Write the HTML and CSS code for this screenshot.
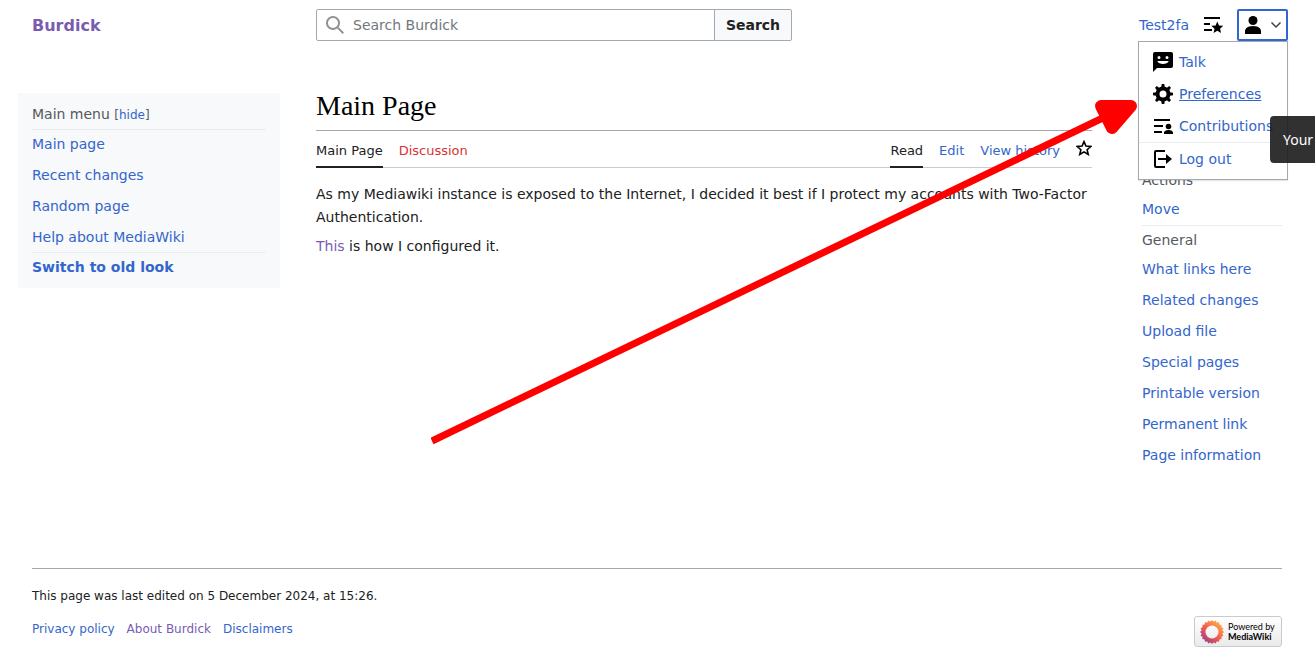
FILE: index.html
```html
<!DOCTYPE html>
<html lang="en">
<head>
    <meta charset="UTF-8">
    <meta name="viewport" content="width=device-width, initial-scale=1.0">
    <title>Main Page - Burdick</title>
    <link rel="stylesheet" href="styles.css">
</head>
<body>
    <header class="header">
        <a class="logo" href="#">Burdick</a>
        <form class="search">
            <label class="search-field">
                <svg class="icon" viewBox="0 0 20 20"><path fill-rule="evenodd" d="M12.2 13.6a7 7 0 1 1 1.4-1.4l5.4 5.4-1.4 1.4zM3 8a5 5 0 1 0 10 0A5 5 0 0 0 3 8z"/></svg>
                <input type="search" placeholder="Search Burdick" aria-label="Search Burdick">
            </label>
            <button class="search-button" type="submit">Search</button>
        </form>
        <div class="user-links">
            <a href="#">Test2fa</a>
            <a class="watchlist" href="#" aria-label="Watchlist">
                <svg class="icon" viewBox="0 0 20 20"><path d="M1 2h16v2H1zm0 6h6v2H1zm0 6h8v2H1z"/><path d="M14.3 6.4l1.7 4 4.3.4-3.2 2.9.9 4.3-3.7-2.3-3.7 2.300.9-4.300-3.200-2.900 4.300-.4z"/></svg>
            </a>
            <div class="user-menu">
                <button class="user-button" type="button" aria-label="Personal tools">
                    <svg class="icon" viewBox="0 0 20 20"><circle cx="10" cy="5.5" r="4.5"/><path d="M10 11c-5.9 0-8 3-8 5v3h16v-3c0-2-2.1-5-8-5z"/></svg>
                    <svg class="chevron" viewBox="0 0 12 12"><path d="M1.5 3.5L6 8l4.5-4.5"/></svg>
                </button>
                <ul class="dropdown">
                    <li><a href="#">
                        <svg class="icon" viewBox="0 0 20 20"><path fill-rule="evenodd" d="M18 0H2a2 2 0 0 0-2 2v18l4-4h14a2 2 0 0 0 2-2V2a2 2 0 0 0-2-2zm-4 4a1.5 1.5 0 1 1-1.5 1.5A1.5 1.5 0 0 1 14 4zM6 4a1.5 1.5 0 1 1-1.5 1.5A1.5 1.5 0 0 1 6 4zm4 8c-2.6 0-4.8-.7-5.7-3h11.4c-.9 2.3-3.1 3-5.7 3z"/></svg>
                        Talk</a></li>
                    <li><a class="active" href="#">
                        <svg class="icon" viewBox="0 0 20 20"><circle class="gear-ring" cx="10" cy="10" r="5.5"/><path id="tooth" d="M8.2 3.5L8.7 0h2.6l.5 3.5zM8.2 16.5l.5 3.5h2.6l.5-3.5z"/><use href="#tooth" transform="rotate(45 10 10)"/><use href="#tooth" transform="rotate(90 10 10)"/><use href="#tooth" transform="rotate(135 10 10)"/></svg>
                        <span>Preferences</span></a></li>
                    <li><a href="#">
                        <svg class="icon" viewBox="0 0 20 20"><path d="M1 3h16v2H1zm0 6h9v2H1zm0 6h8v2H1z"/><circle cx="15.5" cy="10.5" r="2.8"/><path d="M15.5 14c-3.3 0-4.5 1.6-4.5 2.8V18h9v-1.2c0-1.200-1.200-2.800-4.500-2.800z"/></svg>
                        Contributions</a></li>
                    <li class="divided"><a href="#">
                        <svg class="icon" viewBox="0 0 20 20"><path d="M3 3h9V1H3a2 2 0 0 0-2 2v14a2 2 0 0 0 2 2h9v-2H3z"/><path d="M13 5v4H5v2h8v4l6-5z"/></svg>
                        Log out</a></li>
                </ul>
            </div>
        </div>
    </header>

    <div class="page">
        <nav class="main-menu">
            <div class="menu-heading">Main menu <button type="button">[<span>hide</span>]</button></div>
            <ul class="links">
                <li><a href="#">Main page</a></li>
                <li><a href="#">Recent changes</a></li>
                <li><a href="#">Random page</a></li>
                <li><a href="#">Help about MediaWiki</a></li>
            </ul>
            <a class="switch-look" href="#">Switch to old look</a>
        </nav>

        <main class="content">
            <h1>Main Page</h1>
            <div class="tabs">
                <a class="selected" href="#">Main Page</a>
                <a class="missing" href="#">Discussion</a>
                <span class="spacer"></span>
                <a class="selected" href="#">Read</a>
                <a href="#">Edit</a>
                <a href="#">View history</a>
                <a class="watch" href="#" aria-label="Watch">
                    <svg viewBox="0 0 20 20"><path d="M10 2l2.4 5.6 6.1.5-4.6 4 1.4 6L10 14.9l-5.300 3.200 1.400-6-4.600-4 6.100-.5z"/></svg>
                </a>
            </div>
            <p>As my Mediawiki instance is exposed to the Internet, I decided it best if I protect my accounts with Two-Factor Authentication.</p>
            <p><a class="visited" href="#">This</a> is how I configured it.</p>
        </main>

        <aside class="tools">
            <h2>Actions</h2>
            <ul class="links">
                <li><a href="#">Move</a></li>
            </ul>
            <h2 class="divided">General</h2>
            <ul class="links">
                <li><a href="#">What links here</a></li>
                <li><a href="#">Related changes</a></li>
                <li><a href="#">Upload file</a></li>
                <li><a href="#">Special pages</a></li>
                <li><a href="#">Printable version</a></li>
                <li><a href="#">Permanent link</a></li>
                <li><a href="#">Page information</a></li>
            </ul>
        </aside>
    </div>

    <footer class="footer">
        <p>This page was last edited on 5 December 2024, at 15:26.</p>
        <div class="footer-row">
            <ul class="footer-links">
                <li><a href="#">Privacy policy</a></li>
                <li><a class="visited" href="#">About Burdick</a></li>
                <li><a href="#">Disclaimers</a></li>
            </ul>
            <a class="powered" href="#">
                <svg viewBox="0 0 24 24">
                    <defs>
                        <linearGradient id="petals" x1="0.9" y1="0" x2="0.1" y2="1">
                            <stop offset="0" stop-color="#ffc04a"/>
                            <stop offset="0.5" stop-color="#f4604c"/>
                            <stop offset="1" stop-color="#8a3a90"/>
                        </linearGradient>
                        <mask id="flower">
                            <g fill="#fff">
                                <path id="square" d="M12 0l12 12-12 12L0 12z"/>
                                <use href="#square" transform="rotate(18 12 12)"/>
                                <use href="#square" transform="rotate(36 12 12)"/>
                                <use href="#square" transform="rotate(54 12 12)"/>
                                <use href="#square" transform="rotate(72 12 12)"/>
                            </g>
                            <circle cx="12" cy="12" r="6.5" fill="#000"/>
                        </mask>
                    </defs>
                    <rect width="24" height="24" fill="url(#petals)" mask="url(#flower)"/>
                </svg>
                <span>Powered by<br><b>MediaWiki</b></span>
            </a>
        </div>
    </footer>

    <div class="tooltip">Your</div>
    <svg class="arrow" viewBox="0 0 710 350">
        <path class="shaft" d="M1 342L680 15"/>
        <path class="head" d="M670 7l30 0-19 22z"/>
    </svg>
</body>
</html>
```

FILE: styles.css
```css
* {
    box-sizing: border-box;
}
body {
    position: relative;
    margin: 0;
    background-color: #fff;
    color: #202122;
    font-family: "DejaVu Sans", sans-serif;
    font-size: 14px;
    overflow-x: hidden;
}
a {
    color: #36c;
    text-decoration: none;
}
a:hover,
.active span {
    text-decoration: underline;
}
ul {
    list-style: none;
    margin: 0;
    padding: 0;
}
button,
input {
    font: inherit;
}
.visited {
    color: #795cb2;
}
.icon {
    display: block;
    flex: none;
    width: 20px;
    height: 20px;
    fill: #000;
}

/* header */
.header {
    display: grid;
    grid-template-columns: 248px minmax(0, 476px) 1fr;
    column-gap: 36px;
    align-items: center;
    height: 50px;
    padding: 0 27px 0 32px;
}
.logo {
    color: #795cb2;
    font-size: 16px;
    font-weight: bold;
}
.search {
    display: flex;
    height: 32px;
}
.search-field {
    display: flex;
    flex: 1;
    align-items: center;
    gap: 8px;
    padding-left: 8px;
    border: 1px solid #a2a9b1;
    border-radius: 2px 0 0 2px;
}
.search-field .icon {
    fill: #929292;
}
.search-field input {
    flex: 1;
    min-width: 0;
    padding: 0;
    border: none;
    outline: none;
    background: none;
}
.search-field input::placeholder {
    color: #72777d;
}
.search-button {
    width: 78px;
    margin-left: -1px;
    padding: 0;
    border: 1px solid #a2a9b1;
    border-radius: 0 2px 2px 0;
    background-color: #f8f9fa;
    color: #202122;
    font-weight: bold;
}
.user-links {
    display: flex;
    justify-content: flex-end;
    align-items: center;
    gap: 14px;
}
.user-menu {
    position: relative;
}
.user-button {
    display: flex;
    align-items: center;
    justify-content: center;
    gap: 7px;
    width: 51px;
    height: 32px;
    padding: 0;
    border: 2px solid #36c;
    border-radius: 2px;
    background-color: #fff;
}
.chevron {
    width: 12px;
    height: 12px;
    fill: none;
    stroke: #404244;
    stroke-width: 1.5;
}
.dropdown {
    position: absolute;
    top: 100%;
    right: 0;
    z-index: 2;
    width: 150px;
    padding: 4px 0;
    border: 1px solid #a2a9b1;
    background-color: #fff;
    box-shadow: 0 1px 1px rgba(0, 0, 0, 0.1);
}
.dropdown a {
    display: flex;
    align-items: center;
    gap: 6px;
    height: 32px;
    padding-left: 14px;
}
.divided {
    border-top: 1px solid #eaecf0;
}
.gear-ring {
    fill: none;
    stroke: #000;
    stroke-width: 4;
}

/* page columns */
.page {
    display: grid;
    grid-template-columns: 262px 1fr 140px;
    align-items: start;
    padding: 43px 33px 0 18px;
}
.main-menu {
    padding: 6px 14px;
    background-color: #f8f9fa;
    line-height: 29px;
}
.menu-heading {
    height: 31px;
    border-bottom: 1px solid #eaecf0;
    color: #54595d;
    line-height: 31px;
}
.menu-heading button {
    padding: 0;
    border: none;
    background: none;
    color: #54595d;
    font-size: 12px;
}
.menu-heading span {
    color: #36c;
}
.links {
    display: flex;
    flex-direction: column;
    gap: 2px;
    line-height: 29px;
}
.switch-look {
    display: block;
    border-top: 1px solid #eaecf0;
    font-weight: bold;
}
.content {
    min-width: 0;
    padding: 0 50px 0 36px;
}
.content h1 {
    margin: 0;
    height: 38px;
    border-bottom: 1px solid #a2a9b1;
    color: #000;
    font-family: "Liberation Serif", serif;
    font-size: 28px;
    font-weight: normal;
    line-height: 26px;
}
.tabs {
    display: flex;
    gap: 16px;
    height: 37px;
    margin-bottom: 15px;
    border-bottom: 1px solid #c8ccd1;
    font-size: 13px;
    line-height: 39px;
}
.tabs a {
    height: 37px;
}
.tabs .selected {
    border-bottom: 2px solid #202122;
    color: #202122;
}
.tabs .missing {
    color: #d73333;
}
.spacer {
    flex: 1;
}
.tabs .watch {
    display: flex;
    align-items: center;
    padding-bottom: 4px;
}
.watch svg {
    width: 16px;
    height: 16px;
    fill: none;
    stroke: #000;
    stroke-width: 2;
}
.content p {
    margin: 0 0 6px;
    line-height: 23px;
}
.tools {
    padding-top: 73px;
}
.tools h2 {
    margin: 0;
    color: #54595d;
    font-size: 14px;
    font-weight: normal;
    line-height: 29px;
}
.tools .links {
    padding-bottom: 1px;
}

/* footer */
.footer {
    margin: 97px 33px 0 32px;
    padding-top: 16px;
    border-top: 1px solid #a2a9b1;
    font-size: 12px;
}
.footer p {
    margin: 0 0 8px;
    line-height: 23px;
}
.footer-row {
    display: flex;
    justify-content: space-between;
    align-items: flex-start;
}
.footer-links {
    display: flex;
    gap: 12px;
    line-height: 27px;
}
.powered {
    display: flex;
    align-items: center;
    gap: 4px;
    width: 88px;
    height: 31px;
    padding-left: 5px;
    border: 1px solid #c8ccd1;
    border-radius: 3px;
    background: linear-gradient(#fff, #eaeaea);
    color: #000;
    font-family: Lato, sans-serif;
    font-size: 9px;
    line-height: 10px;
    white-space: nowrap;
}
.powered svg {
    flex: none;
    width: 24px;
    height: 24px;
}

/* overlays */
.tooltip {
    position: absolute;
    top: 116px;
    right: 0;
    z-index: 3;
    width: 45px;
    height: 47px;
    padding-left: 13px;
    border-radius: 4px 0 0 4px;
    background-color: rgba(32, 32, 32, 0.92);
    color: #fff;
    font-family: "Noto Sans", sans-serif;
    font-size: 14px;
    line-height: 47px;
}
.arrow {
    position: absolute;
    top: 99px;
    left: 431px;
    width: 710px;
    height: 350px;
    pointer-events: none;
}
.shaft {
    stroke: #f00;
    stroke-width: 7;
}
.head {
    fill: #f00;
    stroke: #f00;
    stroke-width: 12;
    stroke-linejoin: round;
}
```
